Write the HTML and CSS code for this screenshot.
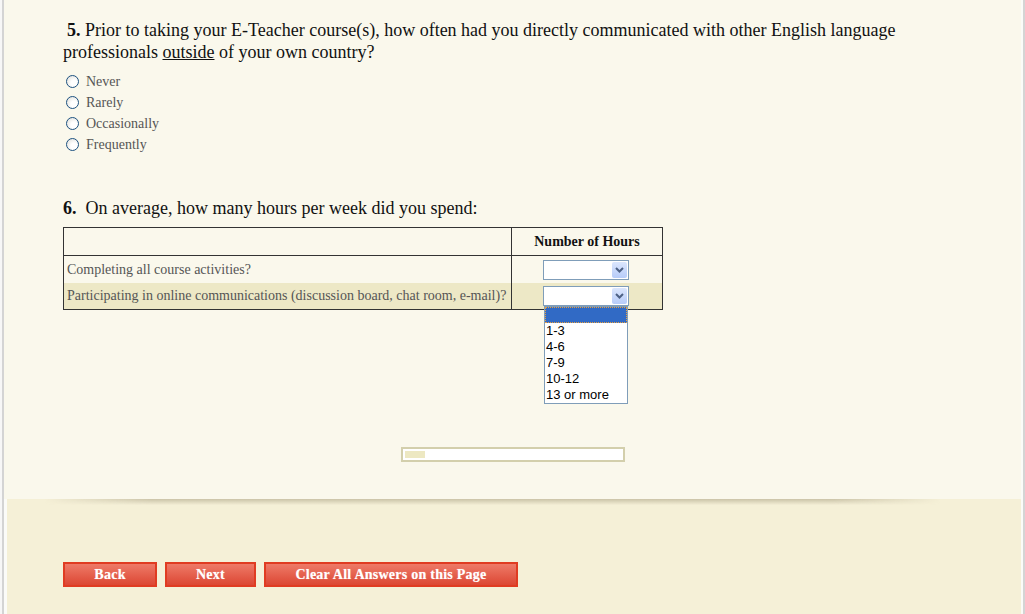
FILE: index.html
```html
<!DOCTYPE html>
<html lang="en">
<head>
    <meta charset="UTF-8">
    <title>E-Teacher Survey</title>
    <link rel="stylesheet" href="styles.css">
</head>
<body>

    <div class="page">
        <div class="survey">

            <!-- Question 5 -->
            <div class="question">
                <p class="qtext indent"><b>5.</b> Prior to taking your E-Teacher course(s), how often had you directly communicated with other English language<br>professionals <u>outside</u> of your own country?</p>
                <ul class="choices">
                    <li><span class="radio"></span>Never</li>
                    <li><span class="radio"></span>Rarely</li>
                    <li><span class="radio"></span>Occasionally</li>
                    <li><span class="radio"></span>Frequently</li>
                </ul>
            </div>

            <!-- Question 6 -->
            <div class="question q6">
                <p class="qtext"><b>6.</b>&nbsp; On average, how many hours per week did you spend:</p>
                <table class="grid">
                    <tr class="head">
                        <th class="label-col"></th>
                        <th class="hours-col">Number of Hours</th>
                    </tr>
                    <tr>
                        <td class="label-col">Completing all course activities?</td>
                        <td class="hours-col"><div class="combo"><span class="combo-btn"><svg width="9" height="6" viewBox="0 0 9 6"><path d="M1 1 L4.5 4.5 L8 1" fill="none" stroke="#4d6185" stroke-width="2"/></svg></span></div></td>
                    </tr>
                    <tr class="alt">
                        <td class="label-col">Participating in online communications (discussion board, chat room, e-mail)?</td>
                        <td class="hours-col">
                            <div class="combo open">
                                <span class="combo-btn"><svg width="9" height="6" viewBox="0 0 9 6"><path d="M1 1 L4.5 4.5 L8 1" fill="none" stroke="#4d6185" stroke-width="2"/></svg></span>
                                <ul class="combo-list">
                                    <li class="selected"></li>
                                    <li>1-3</li>
                                    <li>4-6</li>
                                    <li>7-9</li>
                                    <li>10-12</li>
                                    <li>13 or more</li>
                                </ul>
                            </div>
                        </td>
                    </tr>
                </table>
            </div>

            <div class="progress"><div class="progress-fill"></div></div>
        </div>

        <div class="nav">
            <button class="nav-btn back">Back</button>
            <button class="nav-btn next">Next</button>
            <button class="nav-btn clear">Clear All Answers on this Page</button>
        </div>
    </div>

</body>
</html>
```

FILE: styles.css
```css
html, body {
    margin: 0;
    padding: 0;
    height: 100%;
}
body {
    background-color: #f7f7f7;
    font-family: "Liberation Serif", "Times New Roman", serif;
    color: #111;
    padding: 0 0 0 2px;
    box-sizing: border-box;
    overflow: hidden;
}
.page {
    border-left: 2px solid #d4d4d4;
    border-right: 2px solid #d4d4d4;
    padding: 0 2px 0 3px;
    background-color: #fbfbf8;
    min-height: 100%;
    box-sizing: border-box;
    display: flex;
    flex-direction: column;
}
.survey {
    position: relative;
    background-color: #faf8ec;
    padding: 19px 60px 37px 59px;
    margin-left: -3px;
}
.survey::after {
    content: "";
    position: absolute;
    left: 40px;
    right: 80px;
    bottom: -6px;
    height: 6px;
    background: linear-gradient(to bottom, rgba(150, 140, 110, 0.45), rgba(150, 140, 110, 0));
    -webkit-mask-image: linear-gradient(to right, transparent, #000 12%, #000 88%, transparent);
    mask-image: linear-gradient(to right, transparent, #000 12%, #000 88%, transparent);
}
.qtext {
    margin: 0;
    font-size: 18px;
    line-height: 22px;
    color: #111;
}
.qtext.indent b {
    margin-left: 4px;
}
.choices {
    list-style: none;
    margin: 8px 0 0 0;
    padding: 0 0 0 3px;
}
.choices li {
    height: 21px;
    display: flex;
    align-items: center;
    font-size: 14px;
    color: #555;
}
.radio {
    width: 11px;
    height: 11px;
    border: 1px solid #1c5180;
    border-radius: 50%;
    background: radial-gradient(circle at 65% 65%, #ffffff 30%, #dcdcd6 100%);
    margin-right: 7px;
    flex-shrink: 0;
}
.q6 {
    margin-top: 42px;
}
.q6 .qtext {
    margin-bottom: 8px;
}
.grid {
    border-collapse: collapse;
    width: 600px;
    border: 1px solid #333;
    font-size: 14px;
}
.grid th, .grid td {
    padding: 0 3px;
    height: 27px;
    color: #555;
    font-weight: normal;
    text-align: left;
}
.grid .head th {
    border-bottom: 1px solid #333;
    color: #111;
    font-weight: bold;
    text-align: center;
}
.grid .hours-col {
    width: 144px;
    border-left: 1px solid #333;
    text-align: center;
}
.grid tr.alt td {
    background-color: #ede8c6;
    height: 26px;
}
.combo {
    position: relative;
    display: inline-block;
    vertical-align: middle;
    width: 84px;
    height: 18px;
    border: 1px solid #7f9db9;
    background-color: #fff;
    left: -1px;
}
.combo-btn {
    position: absolute;
    right: 1px;
    top: 1px;
    width: 15px;
    height: 16px;
    border-radius: 2px;
    background: linear-gradient(to bottom, #dbe6fd, #b7ccf9);
    display: flex;
    align-items: center;
    justify-content: center;
}
.combo-list {
    position: absolute;
    left: 0;
    top: 19px;
    width: 82px;
    margin: 0;
    padding: 0;
    list-style: none;
    background-color: #fff;
    border: 1px solid #7f9db9;
    font-family: "Liberation Sans", Arial, sans-serif;
    font-size: 13px;
    color: #000;
    text-align: left;
    z-index: 2;
}
.combo-list li {
    height: 16px;
    line-height: 16px;
    padding-left: 1px;
}
.combo-list li.selected {
    background-color: #316ac5;
    outline: 1px dotted #e8a040;
    outline-offset: -1px;
}
.progress {
    width: 216px;
    height: 7px;
    margin: 137px auto 0 auto;
    border: 2px solid #d3cfac;
    background-color: #fff;
    padding: 2px;
    box-sizing: content-box;
    position: relative;
    left: 1px;
}
.progress-fill {
    width: 20px;
    height: 7px;
    background-color: #ede8c2;
}
.nav {
    flex: 1;
    background-color: #f5f0d7;
    padding: 63px 0 0 56px;
    display: flex;
    gap: 8px;
    align-items: flex-start;
}
.nav-btn {
    height: 25px;
    padding: 0;
    border: 2px solid #e03c22;
    background: linear-gradient(to bottom, #ee7a68, #dc4733);
    color: #fff;
    font-family: "Liberation Serif", "Times New Roman", serif;
    font-weight: bold;
    font-size: 14px;
    letter-spacing: 0.25px;
    cursor: pointer;
    text-shadow: 0 0 1px rgba(255, 255, 255, 0.5);
}
.back {
    width: 94px;
}
.next {
    width: 91px;
}
.clear {
    width: 254px;
}
```
